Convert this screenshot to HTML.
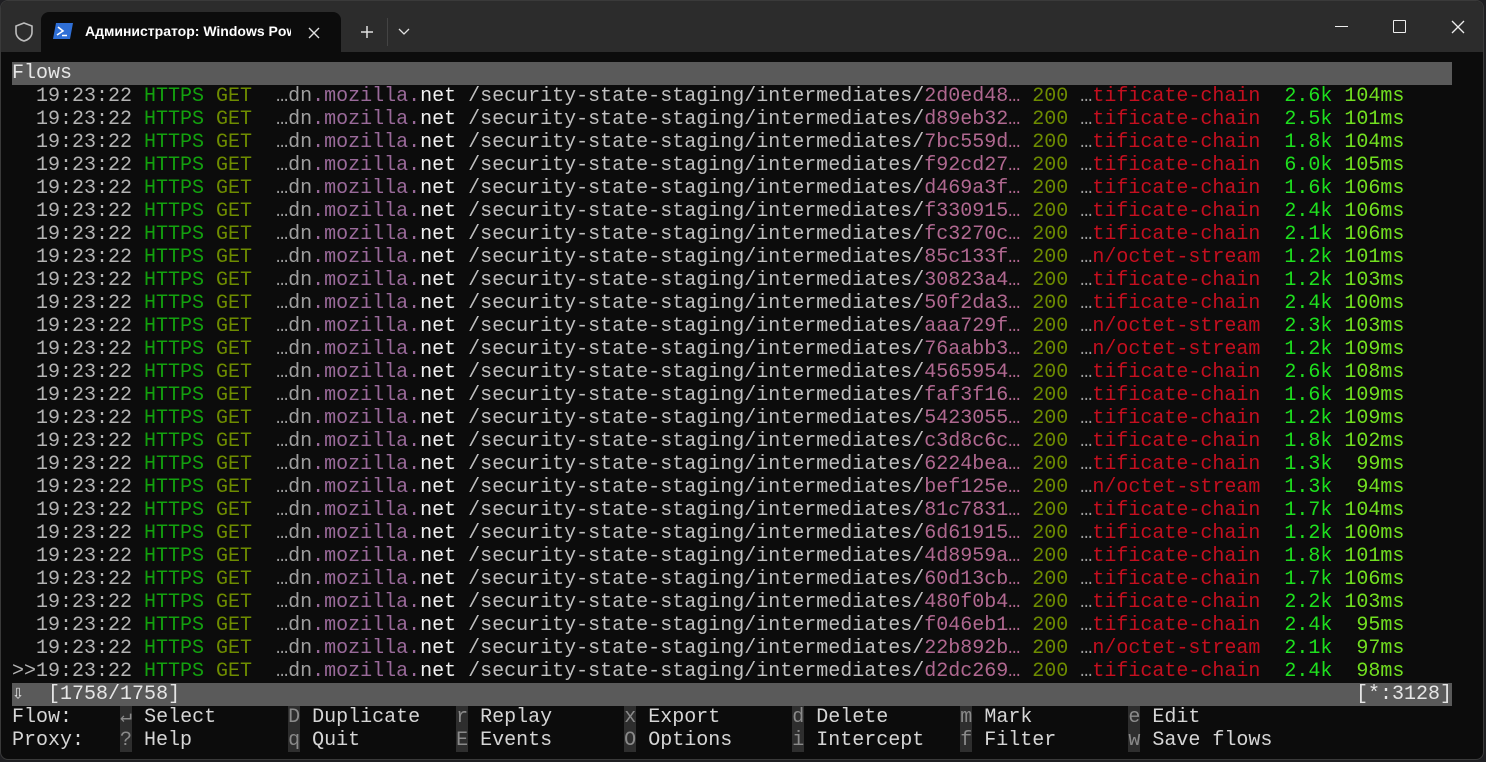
<!DOCTYPE html>
<html><head><meta charset="utf-8"><style>
*{margin:0;padding:0;box-sizing:border-box}
html,body{width:1486px;height:762px;overflow:hidden;background:#1f1f22}
.win{position:absolute;left:0;top:0;width:1484px;height:760px;background:#0c0c0c;border-radius:8px;overflow:hidden;border:1px solid #3a3a3a}
.tb{position:absolute;left:0;top:0;width:1486px;height:51px;background:#2c2c2c}
.tab{position:absolute;left:40px;top:11px;width:300px;height:41px;background:#0c0c0c;border-radius:8px 8px 0 0}
.tt{position:absolute;left:84px;top:22px;font:bold 14px "Liberation Sans",sans-serif;color:#fff;width:206px;overflow:hidden;white-space:nowrap}
.term{position:absolute;left:11px;top:61px;font-family:"Liberation Mono",monospace;font-size:20px;line-height:23px;color:#cccccc}
.l{height:23px;white-space:pre}
.bar{background:#5a5a5a;width:1440px;color:#e6e6e6;display:flex;justify-content:space-between}
.t{color:#b4b4b4}.h{color:#13a10e}.o{color:#6e8c00}.d{color:#a0a0a0}.m{color:#9a6a9a}.w{color:#f2f2f2}.p{color:#c0c0c0}.x{color:#b06890}.r{color:#c50f1f}.s{color:#1ee01e}.q{color:#72e020}
.k{background:#2e2e2e;color:#8a8a8a}
.f{color:#d6d6d6}
</style></head><body>
<div class="win">
<div class="tb"></div>
<svg style="position:absolute;left:12px;top:20px" width="22" height="22" viewBox="0 0 22 22"><path d="M11 2 L19 5 V11 C19 16 15 19 11 20 C7 19 3 16 3 11 V5 Z" fill="none" stroke="#bdbdbd" stroke-width="1.6"/></svg>
<div class="tab"></div>
<svg style="position:absolute;left:52px;top:22px" width="20" height="16" viewBox="0 0 20 16"><path d="M3 0 H20 L17 16 H0 Z" fill="#2f6fd6"/><path d="M5 4 L10 8 L4 12" fill="none" stroke="#fff" stroke-width="1.6"/><path d="M9 12.5 H14" stroke="#fff" stroke-width="1.4"/></svg>
<div class="tt">Администратор: Windows PowerShell</div>
<svg style="position:absolute;left:306px;top:25px" width="14" height="14"><path d="M2 2 L12 12 M12 2 L2 12" stroke="#e0e0e0" stroke-width="1.4"/></svg>
<svg style="position:absolute;left:359px;top:24px" width="14" height="14"><path d="M7 1 V13 M1 7 H13" stroke="#e0e0e0" stroke-width="1.5"/></svg>
<div style="position:absolute;left:386px;top:17px;width:1px;height:28px;background:#444"></div>
<svg style="position:absolute;left:397px;top:27px" width="12" height="8"><path d="M1 1 L6 6 L11 1" fill="none" stroke="#e0e0e0" stroke-width="1.3"/></svg>
<div style="position:absolute;left:1334px;top:25px;width:13px;height:1px;background:#eee"></div>
<div style="position:absolute;left:1392px;top:19px;width:13px;height:13px;border:1.2px solid #eee;border-radius:1px"></div>
<svg style="position:absolute;left:1450px;top:19px" width="14" height="14"><path d="M1 1 L13 13 M13 1 L1 13" stroke="#eee" stroke-width="1.3"/></svg>
<div class="term"><div class="l bar"><span>Flows</span></div><div class="l"><span class="t">  19:23:22 </span><span class="h">HTTPS </span><span class="o">GET</span>  <span class="d">…dn</span><span class="m">.mozilla.</span><span class="w">net</span> <span class="p">/security-state-staging/intermediates/</span><span class="x">2d0ed48…</span> <span class="o">200</span> <span class="d">…</span><span class="r">tificate-chain</span>  <span class="s">2.6k</span> <span class="q">104ms</span></div><div class="l"><span class="t">  19:23:22 </span><span class="h">HTTPS </span><span class="o">GET</span>  <span class="d">…dn</span><span class="m">.mozilla.</span><span class="w">net</span> <span class="p">/security-state-staging/intermediates/</span><span class="x">d89eb32…</span> <span class="o">200</span> <span class="d">…</span><span class="r">tificate-chain</span>  <span class="s">2.5k</span> <span class="q">101ms</span></div><div class="l"><span class="t">  19:23:22 </span><span class="h">HTTPS </span><span class="o">GET</span>  <span class="d">…dn</span><span class="m">.mozilla.</span><span class="w">net</span> <span class="p">/security-state-staging/intermediates/</span><span class="x">7bc559d…</span> <span class="o">200</span> <span class="d">…</span><span class="r">tificate-chain</span>  <span class="s">1.8k</span> <span class="q">104ms</span></div><div class="l"><span class="t">  19:23:22 </span><span class="h">HTTPS </span><span class="o">GET</span>  <span class="d">…dn</span><span class="m">.mozilla.</span><span class="w">net</span> <span class="p">/security-state-staging/intermediates/</span><span class="x">f92cd27…</span> <span class="o">200</span> <span class="d">…</span><span class="r">tificate-chain</span>  <span class="s">6.0k</span> <span class="q">105ms</span></div><div class="l"><span class="t">  19:23:22 </span><span class="h">HTTPS </span><span class="o">GET</span>  <span class="d">…dn</span><span class="m">.mozilla.</span><span class="w">net</span> <span class="p">/security-state-staging/intermediates/</span><span class="x">d469a3f…</span> <span class="o">200</span> <span class="d">…</span><span class="r">tificate-chain</span>  <span class="s">1.6k</span> <span class="q">106ms</span></div><div class="l"><span class="t">  19:23:22 </span><span class="h">HTTPS </span><span class="o">GET</span>  <span class="d">…dn</span><span class="m">.mozilla.</span><span class="w">net</span> <span class="p">/security-state-staging/intermediates/</span><span class="x">f330915…</span> <span class="o">200</span> <span class="d">…</span><span class="r">tificate-chain</span>  <span class="s">2.4k</span> <span class="q">106ms</span></div><div class="l"><span class="t">  19:23:22 </span><span class="h">HTTPS </span><span class="o">GET</span>  <span class="d">…dn</span><span class="m">.mozilla.</span><span class="w">net</span> <span class="p">/security-state-staging/intermediates/</span><span class="x">fc3270c…</span> <span class="o">200</span> <span class="d">…</span><span class="r">tificate-chain</span>  <span class="s">2.1k</span> <span class="q">106ms</span></div><div class="l"><span class="t">  19:23:22 </span><span class="h">HTTPS </span><span class="o">GET</span>  <span class="d">…dn</span><span class="m">.mozilla.</span><span class="w">net</span> <span class="p">/security-state-staging/intermediates/</span><span class="x">85c133f…</span> <span class="o">200</span> <span class="d">…</span><span class="r">n/octet-stream</span>  <span class="s">1.2k</span> <span class="q">101ms</span></div><div class="l"><span class="t">  19:23:22 </span><span class="h">HTTPS </span><span class="o">GET</span>  <span class="d">…dn</span><span class="m">.mozilla.</span><span class="w">net</span> <span class="p">/security-state-staging/intermediates/</span><span class="x">30823a4…</span> <span class="o">200</span> <span class="d">…</span><span class="r">tificate-chain</span>  <span class="s">1.2k</span> <span class="q">103ms</span></div><div class="l"><span class="t">  19:23:22 </span><span class="h">HTTPS </span><span class="o">GET</span>  <span class="d">…dn</span><span class="m">.mozilla.</span><span class="w">net</span> <span class="p">/security-state-staging/intermediates/</span><span class="x">50f2da3…</span> <span class="o">200</span> <span class="d">…</span><span class="r">tificate-chain</span>  <span class="s">2.4k</span> <span class="q">100ms</span></div><div class="l"><span class="t">  19:23:22 </span><span class="h">HTTPS </span><span class="o">GET</span>  <span class="d">…dn</span><span class="m">.mozilla.</span><span class="w">net</span> <span class="p">/security-state-staging/intermediates/</span><span class="x">aaa729f…</span> <span class="o">200</span> <span class="d">…</span><span class="r">n/octet-stream</span>  <span class="s">2.3k</span> <span class="q">103ms</span></div><div class="l"><span class="t">  19:23:22 </span><span class="h">HTTPS </span><span class="o">GET</span>  <span class="d">…dn</span><span class="m">.mozilla.</span><span class="w">net</span> <span class="p">/security-state-staging/intermediates/</span><span class="x">76aabb3…</span> <span class="o">200</span> <span class="d">…</span><span class="r">n/octet-stream</span>  <span class="s">1.2k</span> <span class="q">109ms</span></div><div class="l"><span class="t">  19:23:22 </span><span class="h">HTTPS </span><span class="o">GET</span>  <span class="d">…dn</span><span class="m">.mozilla.</span><span class="w">net</span> <span class="p">/security-state-staging/intermediates/</span><span class="x">4565954…</span> <span class="o">200</span> <span class="d">…</span><span class="r">tificate-chain</span>  <span class="s">2.6k</span> <span class="q">108ms</span></div><div class="l"><span class="t">  19:23:22 </span><span class="h">HTTPS </span><span class="o">GET</span>  <span class="d">…dn</span><span class="m">.mozilla.</span><span class="w">net</span> <span class="p">/security-state-staging/intermediates/</span><span class="x">faf3f16…</span> <span class="o">200</span> <span class="d">…</span><span class="r">tificate-chain</span>  <span class="s">1.6k</span> <span class="q">109ms</span></div><div class="l"><span class="t">  19:23:22 </span><span class="h">HTTPS </span><span class="o">GET</span>  <span class="d">…dn</span><span class="m">.mozilla.</span><span class="w">net</span> <span class="p">/security-state-staging/intermediates/</span><span class="x">5423055…</span> <span class="o">200</span> <span class="d">…</span><span class="r">tificate-chain</span>  <span class="s">1.2k</span> <span class="q">109ms</span></div><div class="l"><span class="t">  19:23:22 </span><span class="h">HTTPS </span><span class="o">GET</span>  <span class="d">…dn</span><span class="m">.mozilla.</span><span class="w">net</span> <span class="p">/security-state-staging/intermediates/</span><span class="x">c3d8c6c…</span> <span class="o">200</span> <span class="d">…</span><span class="r">tificate-chain</span>  <span class="s">1.8k</span> <span class="q">102ms</span></div><div class="l"><span class="t">  19:23:22 </span><span class="h">HTTPS </span><span class="o">GET</span>  <span class="d">…dn</span><span class="m">.mozilla.</span><span class="w">net</span> <span class="p">/security-state-staging/intermediates/</span><span class="x">6224bea…</span> <span class="o">200</span> <span class="d">…</span><span class="r">tificate-chain</span>  <span class="s">1.3k</span>  <span class="q">99ms</span></div><div class="l"><span class="t">  19:23:22 </span><span class="h">HTTPS </span><span class="o">GET</span>  <span class="d">…dn</span><span class="m">.mozilla.</span><span class="w">net</span> <span class="p">/security-state-staging/intermediates/</span><span class="x">bef125e…</span> <span class="o">200</span> <span class="d">…</span><span class="r">n/octet-stream</span>  <span class="s">1.3k</span>  <span class="q">94ms</span></div><div class="l"><span class="t">  19:23:22 </span><span class="h">HTTPS </span><span class="o">GET</span>  <span class="d">…dn</span><span class="m">.mozilla.</span><span class="w">net</span> <span class="p">/security-state-staging/intermediates/</span><span class="x">81c7831…</span> <span class="o">200</span> <span class="d">…</span><span class="r">tificate-chain</span>  <span class="s">1.7k</span> <span class="q">104ms</span></div><div class="l"><span class="t">  19:23:22 </span><span class="h">HTTPS </span><span class="o">GET</span>  <span class="d">…dn</span><span class="m">.mozilla.</span><span class="w">net</span> <span class="p">/security-state-staging/intermediates/</span><span class="x">6d61915…</span> <span class="o">200</span> <span class="d">…</span><span class="r">tificate-chain</span>  <span class="s">1.2k</span> <span class="q">100ms</span></div><div class="l"><span class="t">  19:23:22 </span><span class="h">HTTPS </span><span class="o">GET</span>  <span class="d">…dn</span><span class="m">.mozilla.</span><span class="w">net</span> <span class="p">/security-state-staging/intermediates/</span><span class="x">4d8959a…</span> <span class="o">200</span> <span class="d">…</span><span class="r">tificate-chain</span>  <span class="s">1.8k</span> <span class="q">101ms</span></div><div class="l"><span class="t">  19:23:22 </span><span class="h">HTTPS </span><span class="o">GET</span>  <span class="d">…dn</span><span class="m">.mozilla.</span><span class="w">net</span> <span class="p">/security-state-staging/intermediates/</span><span class="x">60d13cb…</span> <span class="o">200</span> <span class="d">…</span><span class="r">tificate-chain</span>  <span class="s">1.7k</span> <span class="q">106ms</span></div><div class="l"><span class="t">  19:23:22 </span><span class="h">HTTPS </span><span class="o">GET</span>  <span class="d">…dn</span><span class="m">.mozilla.</span><span class="w">net</span> <span class="p">/security-state-staging/intermediates/</span><span class="x">480f0b4…</span> <span class="o">200</span> <span class="d">…</span><span class="r">tificate-chain</span>  <span class="s">2.2k</span> <span class="q">103ms</span></div><div class="l"><span class="t">  19:23:22 </span><span class="h">HTTPS </span><span class="o">GET</span>  <span class="d">…dn</span><span class="m">.mozilla.</span><span class="w">net</span> <span class="p">/security-state-staging/intermediates/</span><span class="x">f046eb1…</span> <span class="o">200</span> <span class="d">…</span><span class="r">tificate-chain</span>  <span class="s">2.4k</span>  <span class="q">95ms</span></div><div class="l"><span class="t">  19:23:22 </span><span class="h">HTTPS </span><span class="o">GET</span>  <span class="d">…dn</span><span class="m">.mozilla.</span><span class="w">net</span> <span class="p">/security-state-staging/intermediates/</span><span class="x">22b892b…</span> <span class="o">200</span> <span class="d">…</span><span class="r">n/octet-stream</span>  <span class="s">2.1k</span>  <span class="q">97ms</span></div><div class="l"><span class="t">&gt;&gt;19:23:22 </span><span class="h">HTTPS </span><span class="o">GET</span>  <span class="d">…dn</span><span class="m">.mozilla.</span><span class="w">net</span> <span class="p">/security-state-staging/intermediates/</span><span class="x">d2dc269…</span> <span class="o">200</span> <span class="d">…</span><span class="r">tificate-chain</span>  <span class="s">2.4k</span>  <span class="q">98ms</span></div><div class="l bar"><span>⇩  [1758/1758]</span><span>[*:3128]</span></div><div class="l f">Flow:    <span class="k">↵</span> Select      <span class="k">D</span> Duplicate   <span class="k">r</span> Replay      <span class="k">x</span> Export      <span class="k">d</span> Delete      <span class="k">m</span> Mark        <span class="k">e</span> Edit</div><div class="l f">Proxy:   <span class="k">?</span> Help        <span class="k">q</span> Quit        <span class="k">E</span> Events      <span class="k">O</span> Options     <span class="k">i</span> Intercept   <span class="k">f</span> Filter      <span class="k">w</span> Save flows</div></div>
</div>
</body></html>
